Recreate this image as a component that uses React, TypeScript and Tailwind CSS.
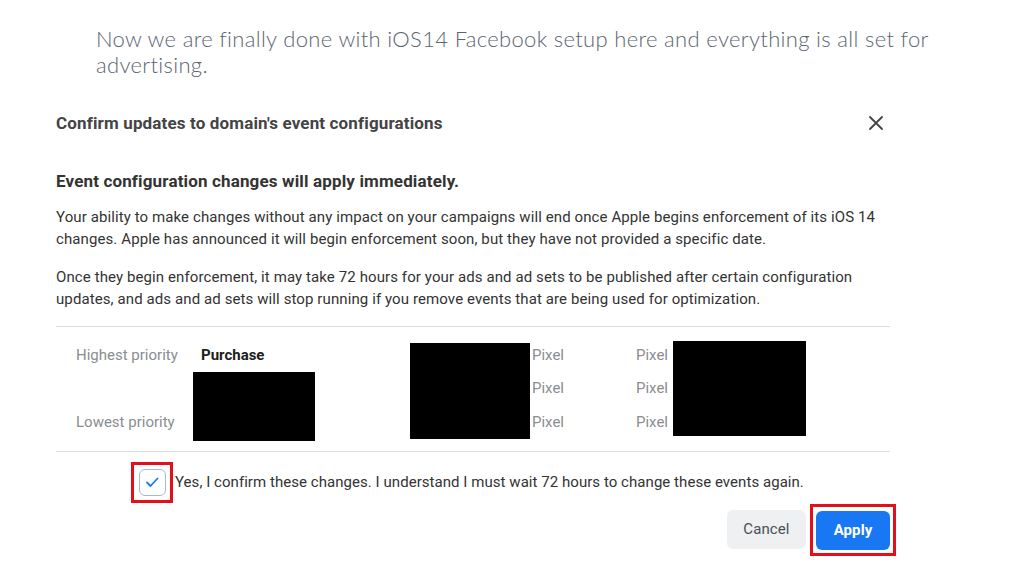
import React from "react";

function Row({ label, event, labelClass = "" }: { label: string; event?: React.ReactNode; labelClass?: string }) {
  return (
    <div className="grid grid-cols-[125px_331px_104px_1fr] h-[33.5px] items-center">
      <div className={"text-[#8a8d91] " + labelClass}>{label}</div>
      <div className="font-bold text-[#1c1e21]">{event}</div>
      <div className="text-[#8a8d91]">Pixel</div>
      <div className="text-[#8a8d91]">Pixel</div>
    </div>
  );
}

export default function App() {
  return (
    <div className="relative w-[1024px] h-[576px] bg-white overflow-hidden">
      <p
        className="pl-[96px] pt-[26px] w-[960px] text-[22px] leading-[26px] tracking-[0.33px] text-[#5b6570] font-light"
        style={{ fontFamily: "Lato, 'Open Sans', sans-serif" }}
      >
        Now we are finally done with iOS14 Facebook setup here and everything is all set for advertising.
      </p>

      <div
        className="ml-[56px] w-[834px] flex flex-col text-[15px] text-[#333] tracking-[0.1px]"
        style={{ fontFamily: "Roboto, 'Liberation Sans', sans-serif" }}
      >
        <div className="mt-[35px] flex items-center justify-between h-[20px]">
          <h1 className="text-[17px] font-bold text-[#444] leading-[20px] tracking-[0.15px]">Confirm updates to domain's event configurations</h1>
          <svg width="16" height="16" viewBox="0 0 16 16" className="mr-[6px]">
            <path d="M2 2 L14 14 M14 2 L2 14" stroke="#444" strokeWidth="1.8" strokeLinecap="round" />
          </svg>
        </div>

        <h2 className="mt-[38px] text-[17px] font-bold text-[#333] leading-[20px] tracking-[0.15px]">Event configuration changes will apply immediately.</h2>

        <p className="mt-[15px] leading-[22px]">
          Your ability to make changes without any impact on your campaigns will end once Apple begins enforcement of its iOS 14 changes. Apple has announced it will begin enforcement soon, but they have not provided a specific date.
        </p>
        <p className="mt-[16px] leading-[22px]">
          Once they begin enforcement, it may take 72 hours for your ads and ad sets to be published after certain configuration updates, and ads and ad sets will stop running if you remove events that are being used for optimization.
        </p>

        <div className="mt-[16px] border-t border-[#dadde1] pt-[11px] pb-[12px] pl-[20px] tracking-normal">
          <Row label="Highest priority" event="Purchase" />
          <Row label="" />
          <Row label="Lowest priority" />
        </div>

        <div className="border-t border-[#dadde1] pt-[10px] pl-[75px] flex items-center">
          <div className="w-[42px] h-[41px] border-[3px] border-[#e3101c] flex items-center justify-center">
            <div className="w-[27px] h-[27px] rounded-[6px] border-[1.5px] border-[#9bbbe6] bg-white flex items-center justify-center">
              <svg width="16" height="16" viewBox="0 0 16 16">
                <path d="M3 8.5 L6.5 12 L13.5 4.5" fill="none" stroke="#1877f2" strokeWidth="1.8" strokeLinecap="round" strokeLinejoin="round" />
              </svg>
            </div>
          </div>
          <span className="ml-[2px] tracking-[0.05px]">Yes, I confirm these changes. I understand I must wait 72 hours to change these events again.</span>
        </div>

        <div className="mt-[1px] flex justify-end items-center mr-[-6px]">
          <button className="w-[79px] h-[39px] rounded-[6px] bg-[#eef0f2] text-[#4b4f56] text-[15px]">Cancel</button>
          <div className="ml-[4px] border-[3px] border-[#e3101c] px-[3px] pt-[4px] pb-[3px]">
            <button className="w-[74px] h-[39px] rounded-[6px] bg-[#1877f2] text-white font-bold text-[15px]">Apply</button>
          </div>
        </div>
      </div>

      <div className="absolute left-[193px] top-[372px] w-[122px] h-[69px] bg-black" />
      <div className="absolute left-[410px] top-[343px] w-[120px] h-[96px] bg-black" />
      <div className="absolute left-[673px] top-[341px] w-[133px] h-[95px] bg-black" />
    </div>
  );
}
